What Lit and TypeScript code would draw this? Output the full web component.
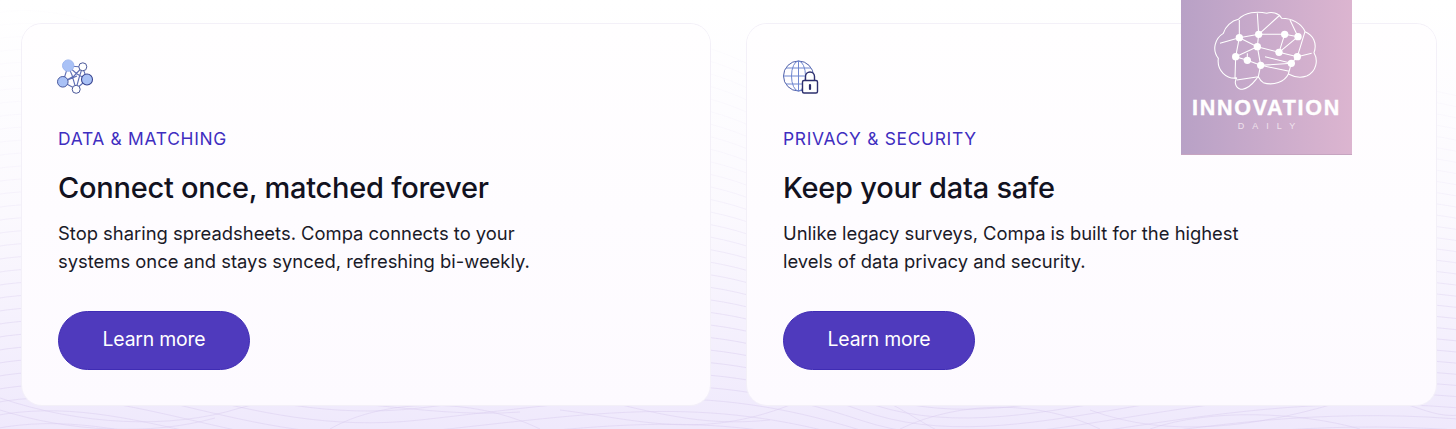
import { LitElement, html, css, svg } from "lit";
import { customElement } from "lit/decorators.js";

const waves = Array.from({ length: 46 }, (_, i) => i - 18);
const arcs = [
  "M0 398C80 425 170 430 240 408S420 420 520 412",
  "M0 410C70 432 150 436 215 418",
  "M330 429C380 400 470 395 540 429",
  "M560 410C640 420 700 440 790 405S900 420 960 440",
  "M610 402C680 420 720 425 770 420",
  "M900 429C960 400 1040 400 1100 429",
  "M1090 410C1170 440 1260 425 1330 405S1420 420 1460 415",
  "M1150 429C1210 408 1300 412 1360 429",
];

@customElement("app-root")
export class AppRoot extends LitElement {
  static styles = css`
    :host { display: block; width: 1456px; height: 429px; overflow: hidden; position: relative; font-family: Inter, "Noto Sans", sans-serif; background: linear-gradient(180deg, #ffffff 0%, #fbf9fe 50%, #efe9fc 100%); }
    .bg { position: absolute; inset: 0; width: 1456px; height: 429px; -webkit-mask-image: linear-gradient(180deg, rgba(0,0,0,.06) 0%, rgba(0,0,0,.25) 40%, #000 80%); mask-image: linear-gradient(180deg, rgba(0,0,0,.06) 0%, rgba(0,0,0,.25) 40%, #000 80%); }
    .bg path { fill: none; stroke: #d6caee; stroke-width: 1; opacity: .45; }
    .page { position: relative; display: flex; gap: 37px; padding: 24px 20px 0 22px; }
    .card { box-sizing: border-box; width: 688px; height: 381px; flex: none; padding: 36px 36px 0; border-radius: 20px; background: linear-gradient(180deg, #fffeff 0%, #fdfaff 100%); box-shadow: 0 0 0 1px #f3f0f8; }
    .card + .card { width: 689px; }
    .icon { display: block; width: 38px; height: 38px; margin: -2px 0 31px -2px; }
    .icon.wide { width: 42px; margin-left: -3px; }
    .eyebrow { font-size: 17.4px; line-height: 24px; letter-spacing: .7px; color: #3f2ec0; font-weight: 400; margin-bottom: 19px; }
    h2 { margin: 0 0 13px; font-size: 29px; line-height: 36px; font-weight: 500; letter-spacing: -.25px; color: #12121f; }
    p { margin: 0 0 36px; font-size: 18.4px; line-height: 28px; letter-spacing: 0; color: #1a1a28; width: 540px; }
    .btn { box-sizing: border-box; display: flex; align-items: center; justify-content: center; width: 192px; height: 59px; padding-bottom: 3px; border-radius: 30px; background: #4f3abd; border: 1px solid #3f2cb4; color: #fff; font-size: 19.4px; font-weight: 400; letter-spacing: -.2px; }
    .mark { position: absolute; left: 1181px; top: 0; width: 171px; height: 155px; background: linear-gradient(90deg, #b8a1c6 0%, #dcb5d0 100%); box-shadow: inset 0 -1px 0 #c6a4c0; }
    .mark svg { position: absolute; inset: 0; width: 171px; height: 155px; }
    .mark .name { position: absolute; top: 97px; left: 0; right: 0; text-align: center; font-family: "Liberation Sans", sans-serif; font-size: 21.5px; line-height: 22px; font-weight: 700; letter-spacing: 1.7px; color: #fff; -webkit-text-stroke: .4px #fff; }
    .mark .sub { position: absolute; top: 121px; left: 0; right: 0; text-align: center; font-family: "Liberation Sans", sans-serif; font-size: 9px; line-height: 10px; font-weight: 400; letter-spacing: 8px; color: #efe2ec; padding-left: 8px; }
  `;

  private waveBg() {
    return html`<svg class="bg" viewBox="0 0 1456 429">
      ${waves.map((i) => svg`<path d="M-20 ${250 + i * 13} C 120 ${215 + i * 13}, 240 ${330 + i * 11}, 420 ${300 + i * 12} S 700 ${240 + i * 14}, 860 ${330 + i * 10} S 1200 ${250 + i * 13}, 1480 ${300 + i * 11}" />`)}
      ${arcs.map((d) => svg`<path d=${d} />`)}
    </svg>`;
  }

  private network() {
    return html`<svg class="icon" viewBox="56 58 38 38">
      <g fill="none" stroke="#5f70b5" stroke-width="1.1">
        <path d="M68 66 82.5 67 87 79.5 76 89 63 82 68 66M68 66 77 74 87 79.5M82.5 67 74 76 63 82M68 66 72 75 76 89M82.5 67 79 78 76 89M63 82 77 76" />
      </g>
      <circle cx="68.2" cy="65.6" r="5.7" fill="#a9c1f6" stroke="#a0b8f0" />
      <circle cx="82.8" cy="66.8" r="4" fill="#fff" stroke="#4a5799" />
      <circle cx="87" cy="79.5" r="5.5" fill="#a9c1f6" stroke="#3a4690" stroke-width="1.1" />
      <circle cx="62.8" cy="81.8" r="5.3" fill="#a9c1f6" stroke="#4a5a9e" stroke-width="1" />
      <circle cx="76.2" cy="89.3" r="4" fill="#fff" stroke="#4a5799" />
    </svg>`;
  }

  private globe() {
    return html`<svg class="icon wide" viewBox="780 58 42 38">
      <g fill="none" stroke="#6f86cf" stroke-width="1">
        <circle cx="798.5" cy="76" r="15" stroke="#4f5fa8" />
        <ellipse cx="798.5" cy="76" rx="7" ry="15" />
        <path d="M798.5 61V91M783.5 76H813.5M786 68H811M786 84H811" />
      </g>
      <path d="M805.5 81V76.5a4.5 4.5 0 0 1 9 0V81" fill="#fff" stroke="#2d2f6e" stroke-width="1.4" />
      <rect x="802.5" y="80.5" width="15" height="12.5" rx="1.5" fill="#fff" stroke="#2d2f6e" stroke-width="1.4" />
      <path d="M810 85V89" stroke="#2d2f6e" stroke-width="2.2" stroke-linecap="round" />
    </svg>`;
  }

  private brain() {
    const nodes = [[208,113],[266,103],[344,103],[384,110],[262,140],[327,157],[382,170],[197,170],[232,181],[272,196],[364,190]];
    return html`<svg viewBox="33 0 513 465">
      <g fill="none" stroke="#fff" stroke-width="3.2" stroke-linejoin="round">
        <path d="M205 58C225 38 260 32 290 40C305 35 325 38 335 55C365 55 395 70 405 95C430 105 442 130 432 158C445 180 440 215 410 228C390 235 370 230 355 222C345 245 310 258 280 248C270 242 268 236 265 230C255 240 245 262 218 268C200 268 190 250 200 234C170 238 140 212 145 175C125 150 135 115 160 100C165 80 185 62 205 58Z" />
        <path d="M208 60 208 113 266 103 262 40M266 103 330 45M266 103 344 103 384 110 360 60M208 113 150 130M208 113 262 140 266 103M262 140 197 170 208 113M262 140 327 157 344 103M327 157 384 110M262 140 272 196 232 181 197 170M197 170 195 235 200 234M232 181 232 160M272 196 364 190 382 170 405 95M327 157 382 170M285 170 364 190M272 196 358 214M200 240 265 230 272 196M382 170 425 160M364 190 355 222" />
      </g>
      <g fill="#fff">${nodes.map(([x, y]) => svg`<circle cx=${x} cy=${y} r="11" />`)}</g>
    </svg>`;
  }

  private card(icon: unknown, eyebrow: string, title: string, l1: string, l2: string) {
    return html`<section class="card">
      ${icon}
      <div class="eyebrow">${eyebrow}</div>
      <h2>${title}</h2>
      <p>${l1}<br />${l2}</p>
      <div class="btn">Learn more</div>
    </section>`;
  }

  render() {
    return html`
      ${this.waveBg()}
      <div class="page">
        ${this.card(this.network(), "DATA & MATCHING", "Connect once, matched forever", "Stop sharing spreadsheets. Compa connects to your", "systems once and stays synced, refreshing bi-weekly.")}
        ${this.card(this.globe(), "PRIVACY & SECURITY", "Keep your data safe", "Unlike legacy surveys, Compa is built for the highest", "levels of data privacy and security.")}
      </div>
      <div class="mark">
        ${this.brain()}
        <div class="name">INNOVATION</div>
        <div class="sub">DAILY</div>
      </div>
    `;
  }
}
